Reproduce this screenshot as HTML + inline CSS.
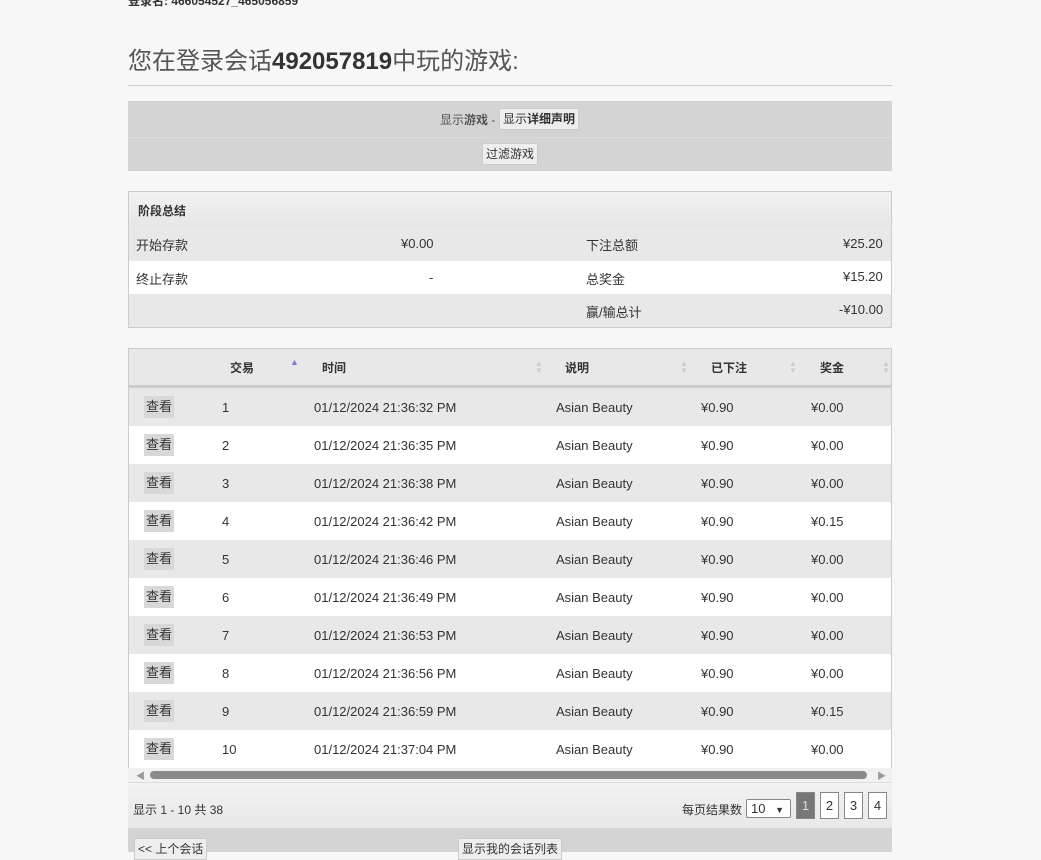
<!DOCTYPE html>
<html><head><meta charset="utf-8"><style>
*{margin:0;padding:0;box-sizing:border-box}
body{width:1041px;height:852px;overflow:hidden;background:#f7f7f7;font-family:"Liberation Sans","Noto Sans CJK SC",sans-serif;color:#333;font-size:13px;position:relative}
.a{position:absolute;white-space:nowrap}
.btn{position:absolute;background:#eee;border:1px solid #ccc;font-size:12px;padding:0 3px;line-height:20px;height:22px}
.row{position:absolute;left:129px;width:762px;height:38px}
.row .a{top:12px;font-size:13px}
.vb{position:absolute;left:15px;top:8px;width:30px;height:22px;background:#d8d8d8;font-size:13px;line-height:22px;text-align:center}
.pg{position:absolute;top:792px;width:19px;height:27px;border:1px solid #888;background:#fff;text-align:center;line-height:25px;font-size:13px}
</style></head><body>
<div class="a" style="left:128px;top:-8px;font-size:12px;font-weight:bold">登录名: 466054527_465056859</div>
<div class="a" style="left:128px;top:41px;font-size:24px;color:#555">您在登录会话<b style="color:#333">492057819</b>中玩的游戏:</div>
<div class="a" style="left:128px;top:85px;width:764px;height:1px;background:#ccc"></div>
<div class="a" style="left:128px;top:101px;width:764px;height:70px;background:#d4d4d4"></div>
<div class="a" style="left:128px;top:137px;width:764px;height:1px;background:#ddd"></div>
<div class="a" style="left:440px;top:111px;font-size:12px;color:#555">显示<b>游戏</b> -</div>
<div class="btn" style="left:499px;top:108px">显示<b>详细声明</b></div>
<div class="btn" style="left:482px;top:143px">过滤游戏</div>

<div class="a" style="left:128px;top:191px;width:764px;height:137px;border:1px solid #ccc;background:#e8e8e8"></div>
<div class="a" style="left:129px;top:192px;width:762px;height:36px;background:linear-gradient(#f2f2f2,#e6e6e6)"></div>
<div class="a" style="left:129px;top:261px;width:762px;height:33px;background:#fff"></div>
<div class="a" style="left:138px;top:202px;font-size:12px;font-weight:bold">阶段总结</div>
<div class="a" style="left:136px;top:235px">开始存款</div><div class="a" style="left:401px;top:236px">¥0.00</div>
<div class="a" style="left:586px;top:235px">下注总额</div><div class="a" style="left:843px;top:236px">¥25.20</div>
<div class="a" style="left:136px;top:269px">终止存款</div><div class="a" style="left:429px;top:270px">-</div>
<div class="a" style="left:586px;top:269px">总奖金</div><div class="a" style="left:843px;top:269px">¥15.20</div>
<div class="a" style="left:586px;top:302px">赢/输总计</div><div class="a" style="left:839px;top:302px">-¥10.00</div>

<div class="a" style="left:128px;top:348px;width:764px;height:434px;border:1px solid #ccc;border-bottom:none;background:#fff"></div>
<div class="a" style="left:129px;top:349px;width:762px;background:#e8e8e8;border-bottom:3px solid #ccc;height:39px"></div>
<div class="a" style="left:230px;top:359px;font-size:12px;font-weight:bold">交易</div>
<div class="a" style="left:290px;top:357px;font-size:9px;color:#7b7bd0">▲</div>
<div class="a" style="left:322px;top:359px;font-size:12px;font-weight:bold">时间</div>
<div class="a" style="left:565px;top:359px;font-size:12px;font-weight:bold">说明</div>
<div class="a" style="left:711px;top:359px;font-size:12px;font-weight:bold">已下注</div>
<div class="a" style="left:820px;top:359px;font-size:12px;font-weight:bold">奖金</div>
<div class="a" style="left:535px;top:360px;font-size:8px;color:#ccc;line-height:7px">▲<br>▼</div>
<div class="a" style="left:680px;top:360px;font-size:8px;color:#ccc;line-height:7px">▲<br>▼</div>
<div class="a" style="left:789px;top:360px;font-size:8px;color:#ccc;line-height:7px">▲<br>▼</div>
<div class="a" style="left:882px;top:360px;font-size:8px;color:#ccc;line-height:7px">▲<br>▼</div>

<div class="row" style="top:388px;background:#e8e8e8"><div class="vb">查看</div><div class="a" style="left:93px">1</div><div class="a" style="left:185px">01/12/2024 21:36:32 PM</div><div class="a" style="left:427px">Asian Beauty</div><div class="a" style="left:572px">¥0.90</div><div class="a" style="left:682px">¥0.00</div></div>
<div class="row" style="top:426px;background:#fff"><div class="vb">查看</div><div class="a" style="left:93px">2</div><div class="a" style="left:185px">01/12/2024 21:36:35 PM</div><div class="a" style="left:427px">Asian Beauty</div><div class="a" style="left:572px">¥0.90</div><div class="a" style="left:682px">¥0.00</div></div>
<div class="row" style="top:464px;background:#e8e8e8"><div class="vb">查看</div><div class="a" style="left:93px">3</div><div class="a" style="left:185px">01/12/2024 21:36:38 PM</div><div class="a" style="left:427px">Asian Beauty</div><div class="a" style="left:572px">¥0.90</div><div class="a" style="left:682px">¥0.00</div></div>
<div class="row" style="top:502px;background:#fff"><div class="vb">查看</div><div class="a" style="left:93px">4</div><div class="a" style="left:185px">01/12/2024 21:36:42 PM</div><div class="a" style="left:427px">Asian Beauty</div><div class="a" style="left:572px">¥0.90</div><div class="a" style="left:682px">¥0.15</div></div>
<div class="row" style="top:540px;background:#e8e8e8"><div class="vb">查看</div><div class="a" style="left:93px">5</div><div class="a" style="left:185px">01/12/2024 21:36:46 PM</div><div class="a" style="left:427px">Asian Beauty</div><div class="a" style="left:572px">¥0.90</div><div class="a" style="left:682px">¥0.00</div></div>
<div class="row" style="top:578px;background:#fff"><div class="vb">查看</div><div class="a" style="left:93px">6</div><div class="a" style="left:185px">01/12/2024 21:36:49 PM</div><div class="a" style="left:427px">Asian Beauty</div><div class="a" style="left:572px">¥0.90</div><div class="a" style="left:682px">¥0.00</div></div>
<div class="row" style="top:616px;background:#e8e8e8"><div class="vb">查看</div><div class="a" style="left:93px">7</div><div class="a" style="left:185px">01/12/2024 21:36:53 PM</div><div class="a" style="left:427px">Asian Beauty</div><div class="a" style="left:572px">¥0.90</div><div class="a" style="left:682px">¥0.00</div></div>
<div class="row" style="top:654px;background:#fff"><div class="vb">查看</div><div class="a" style="left:93px">8</div><div class="a" style="left:185px">01/12/2024 21:36:56 PM</div><div class="a" style="left:427px">Asian Beauty</div><div class="a" style="left:572px">¥0.90</div><div class="a" style="left:682px">¥0.00</div></div>
<div class="row" style="top:692px;background:#e8e8e8"><div class="vb">查看</div><div class="a" style="left:93px">9</div><div class="a" style="left:185px">01/12/2024 21:36:59 PM</div><div class="a" style="left:427px">Asian Beauty</div><div class="a" style="left:572px">¥0.90</div><div class="a" style="left:682px">¥0.15</div></div>
<div class="row" style="top:730px;background:#fff"><div class="vb">查看</div><div class="a" style="left:93px">10</div><div class="a" style="left:185px">01/12/2024 21:37:04 PM</div><div class="a" style="left:427px">Asian Beauty</div><div class="a" style="left:572px">¥0.90</div><div class="a" style="left:682px">¥0.00</div></div>

<div class="a" style="left:128px;top:768px;width:764px;height:14px;background:#f1f1f1"></div>
<div class="a" style="left:136px;top:769px;font-size:9px;color:#999">◀</div>
<div class="a" style="left:877px;top:769px;font-size:9px;color:#999">▶</div>
<div class="a" style="left:150px;top:771px;width:717px;height:8px;border-radius:4px;background:#8a8a8a"></div>

<div class="a" style="left:128px;top:782px;width:764px;height:46px;background:linear-gradient(#f2f2f2,#e8e8e8);border-top:1px solid #ddd"></div>
<div class="a" style="left:133px;top:801px;font-size:12px">显示 1 - 10 共 38</div>
<div class="a" style="left:682px;top:801px;font-size:12px">每页结果数</div>
<div class="a" style="left:746px;top:799px;width:45px;height:19px;border:1px solid #888;background:#fff;border-radius:2px;font-size:13px;line-height:17px;padding-left:4px">10 <span style="font-size:9px;margin-left:6px">▼</span></div>
<div class="pg" style="left:796px;background:#777;color:#ddd">1</div>
<div class="pg" style="left:820px">2</div>
<div class="pg" style="left:844px">3</div>
<div class="pg" style="left:868px">4</div>

<div class="a" style="left:128px;top:828px;width:764px;height:24px;background:#d4d4d4"></div>
<div class="btn" style="left:134px;top:838px">&lt;&lt; 上个会话</div>
<div class="btn" style="left:458px;top:838px">显示我的会话列表</div>
</body></html>
